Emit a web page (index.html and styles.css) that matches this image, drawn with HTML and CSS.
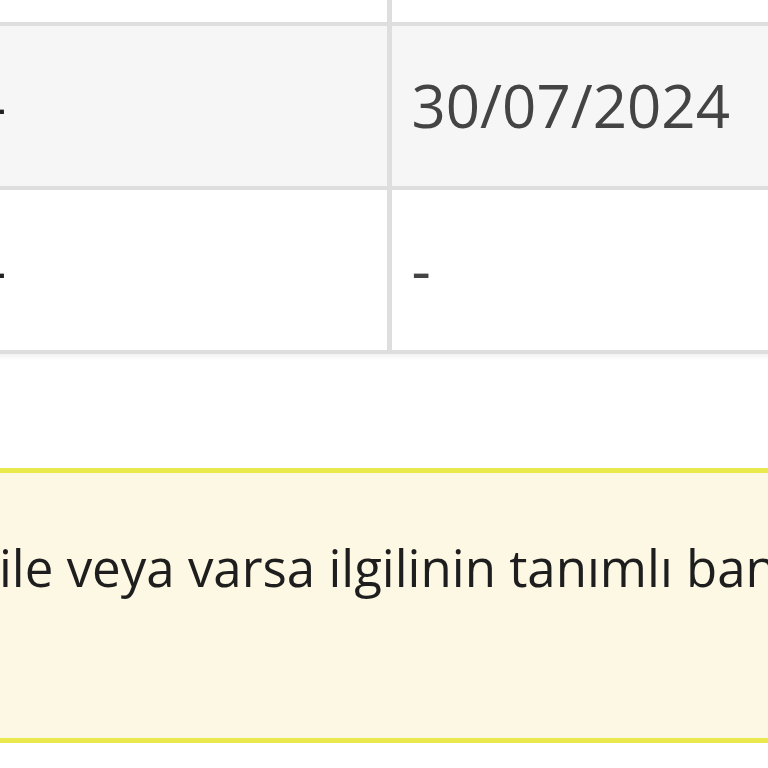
FILE: index.html
```html
<!DOCTYPE html>
<html lang="tr">
<head>
<meta charset="utf-8">
<title>Tablo</title>
<link rel="stylesheet" href="styles.css">
</head>
<body>
<div class="page">
  <div class="table-wrap">
    <table class="data">
      <tr class="row">
        <td class="c1">-</td>
        <td class="c2">-</td>
      </tr>
      <tr class="row alt">
        <td class="c1">-</td>
        <td class="c2">30/07/2024</td>
      </tr>
      <tr class="row">
        <td class="c1">-</td>
        <td class="c2">-</td>
      </tr>
    </table>
  </div>
  <div class="notice">
    <p class="notice-text">ile veya varsa ilgilinin tanımlı banka hesabına aktarılacaktır.</p>
  </div>
</div>
</body>
</html>
```

FILE: styles.css
```css
html, body {
  margin: 0;
  padding: 0;
  background: #ffffff;
  overflow: hidden;
  width: 768px;
  height: 768px;
}

.page {
  font-family: "Open Sans", "Noto Sans", sans-serif;
  width: 768px;
  overflow: hidden;
}

.table-wrap {
  margin-top: -140px;
  margin-left: -33px;
  width: 1000px;
  box-shadow: 0 3px 5px rgba(0, 0, 0, 0.06);
}

.data {
  border-collapse: collapse;
  width: 1000px;
  table-layout: fixed;
}

.row td {
  height: 164px;
  padding: 0 20px;
  box-sizing: border-box;
  font-size: 60px;
  line-height: 1.362;
  color: #444444;
  vertical-align: middle;
  border-bottom: 4px solid #dedede;
  white-space: nowrap;
}

.row td.c1 {
  width: 422px;
  border-right: 5px solid #dedede;
  color: #222222;
}

.row.alt td {
  background: #f6f6f6;
}

.notice {
  margin-top: 114px;
  width: 1000px;
  background: #fdf8e3;
  border-top: 5px solid #e9e84c;
  border-bottom: 5px solid #e9e84c;
  padding: 56px 0 133px 0;
}

.notice-text {
  margin: 0 0 0 -1px;
  font-size: 51px;
  line-height: 76px;
  color: #1e1e1e;
  white-space: nowrap;
}
```
